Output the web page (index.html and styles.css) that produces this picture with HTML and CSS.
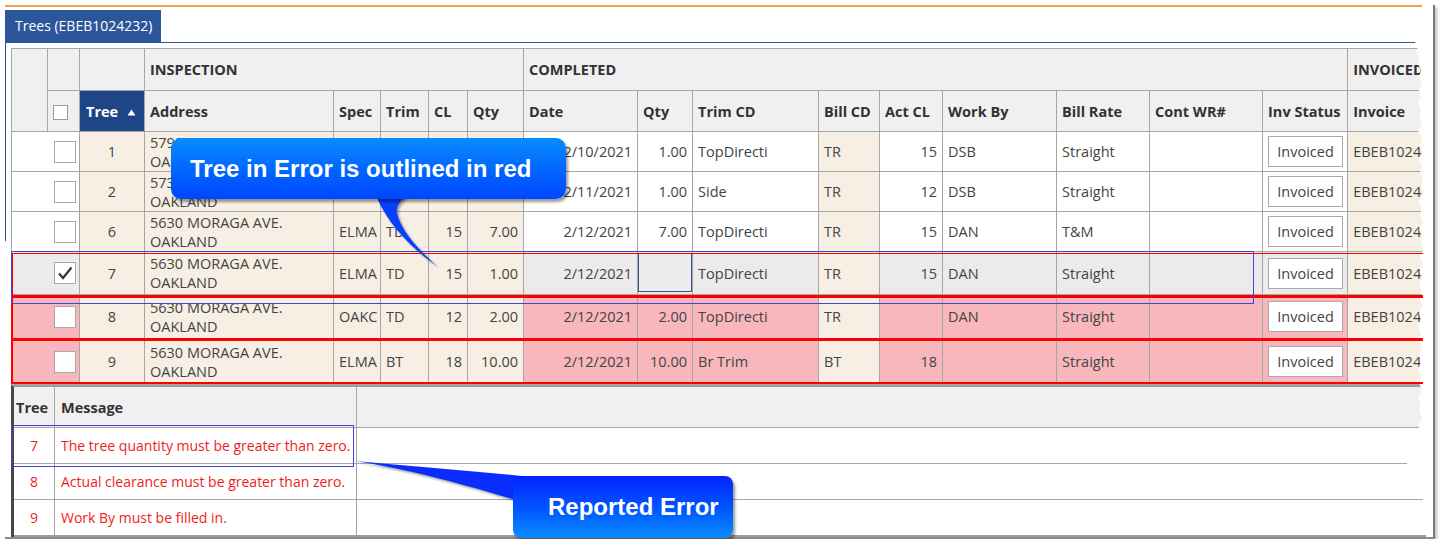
FILE: index.html
```html
<!DOCTYPE html>
<html>
<head>
<meta charset="utf-8">
<title>Trees</title>
<link rel="stylesheet" href="styles.css">
</head>
<body>
<div class="frame">
  <div class="tab">Trees (EBEB1024232)</div>
  <div class="panel">
    <table class="grid">
      <colgroup>
        <col><col><col><col><col><col><col><col><col><col><col><col><col><col><col><col><col><col>
      </colgroup>
      <thead>
        <tr class="hg">
          <th rowspan="2"></th><th></th><th></th>
          <th colspan="5">INSPECTION</th>
          <th colspan="9">COMPLETED</th>
          <th>INVOICED</th>
        </tr>
        <tr class="hc">
          <th><span class="cb cb-sm"></span></th>
          <th class="sorted">Tree <svg class="arrow" width="9" height="7" viewBox="0 0 9 7"><path d="M0.5 6.5 L4.5 0.5 L8.5 6.5 Z" fill="#fff"/></svg></th>
          <th>Address</th><th>Spec</th><th>Trim</th><th>CL</th><th>Qty</th>
          <th>Date</th><th>Qty</th><th>Trim CD</th><th>Bill CD</th><th>Act CL</th>
          <th>Work By</th><th>Bill Rate</th><th>Cont WR#</th><th>Inv Status</th>
          <th>Invoice</th>
        </tr>
      </thead>
      <tbody>
        <tr class="r40">
          <td colspan="2" class="sel"><span class="cb"></span></td>
          <td class="ro c">1</td>
          <td class="ro addr">5790 SKYLINE BLVD.<br>OAKLAND</td>
          <td class="ro r">ELMA</td><td class="ro">TD</td><td class="ro r">15</td><td class="ro r">1.00</td>
          <td class="r">2/10/2021</td><td class="r">1.00</td><td>TopDirecti</td><td class="ro">TR</td>
          <td class="r">15</td><td>DSB</td><td>Straight</td><td></td>
          <td class="c"><span class="inv">Invoiced</span></td>
          <td class="ro">EBEB1024232</td>
        </tr>
        <tr class="r40">
          <td colspan="2" class="sel"><span class="cb"></span></td>
          <td class="ro c">2</td>
          <td class="ro addr">5735 SKYLINE BLVD.<br>OAKLAND</td>
          <td class="ro r">ELMA</td><td class="ro">SD</td><td class="ro r">12</td><td class="ro r">1.00</td>
          <td class="r">2/11/2021</td><td class="r">1.00</td><td>Side</td><td class="ro">TR</td>
          <td class="r">12</td><td>DSB</td><td>Straight</td><td></td>
          <td class="c"><span class="inv">Invoiced</span></td>
          <td class="ro">EBEB1024232</td>
        </tr>
        <tr class="r40">
          <td colspan="2" class="sel"><span class="cb"></span></td>
          <td class="ro c">6</td>
          <td class="ro addr">5630 MORAGA AVE.<br>OAKLAND</td>
          <td class="ro r">ELMA</td><td class="ro">TD</td><td class="ro r">15</td><td class="ro r">7.00</td>
          <td class="r">2/12/2021</td><td class="r">7.00</td><td>TopDirecti</td><td class="ro">TR</td>
          <td class="r">15</td><td>DAN</td><td>T&amp;M</td><td></td>
          <td class="c"><span class="inv">Invoiced</span></td>
          <td class="ro">EBEB1024232</td>
        </tr>
        <tr class="r43 cur">
          <td colspan="2" class="sel"><span class="cb"><svg width="20" height="20" viewBox="0 0 20 20"><path d="M4 10.5 L8 15 L16.5 4.5" fill="none" stroke="#333" stroke-width="2.2"/></svg></span></td>
          <td class="ro c">7</td>
          <td class="ro addr">5630 MORAGA AVE.<br>OAKLAND</td>
          <td class="ro r">ELMA</td><td class="ro">TD</td><td class="ro r">15</td><td class="ro r">1.00</td>
          <td class="r">2/12/2021</td><td class="edit"><div class="editbox"></div></td><td>TopDirecti</td><td class="ro">TR</td>
          <td class="r">15</td><td>DAN</td><td>Straight</td><td></td>
          <td class="c"><span class="inv">Invoiced</span></td>
          <td class="ro">EBEB1024232</td>
        </tr>
        <tr class="r44 err">
          <td colspan="2" class="sel"><span class="cb"></span></td>
          <td class="ro c">8</td>
          <td class="ro addr">5630 MORAGA AVE.<br>OAKLAND</td>
          <td class="ro r">OAKC</td><td class="ro">TD</td><td class="ro r">12</td><td class="ro r">2.00</td>
          <td class="r">2/12/2021</td><td class="r">2.00</td><td>TopDirecti</td><td class="ro">TR</td>
          <td class="r"></td><td>DAN</td><td>Straight</td><td></td>
          <td class="c"><span class="inv">Invoiced</span></td>
          <td class="ro">EBEB1024232</td>
        </tr>
        <tr class="r46 err">
          <td colspan="2" class="sel"><span class="cb"></span></td>
          <td class="ro c">9</td>
          <td class="ro addr">5630 MORAGA AVE.<br>OAKLAND</td>
          <td class="ro r">ELMA</td><td class="ro">BT</td><td class="ro r">18</td><td class="ro r">10.00</td>
          <td class="r">2/12/2021</td><td class="r">10.00</td><td>Br Trim</td><td class="ro">BT</td>
          <td class="r">18</td><td></td><td>Straight</td><td></td>
          <td class="c"><span class="inv">Invoiced</span></td>
          <td class="ro">EBEB1024232</td>
        </tr>
      </tbody>
    </table>

    <table class="msgs">
      <colgroup><col><col><col></colgroup>
      <thead>
        <tr><th class="mt">Tree</th><th>Message</th><th></th></tr>
      </thead>
      <tbody>
        <tr><td class="c">7</td><td>The tree quantity must be greater than zero.</td><td></td></tr>
        <tr><td class="c">8</td><td>Actual clearance must be greater than zero.</td><td></td></tr>
        <tr class="last"><td class="c">9</td><td>Work By must be filled in.</td><td></td></tr>
      </tbody>
    </table>
  </div>

  <div class="mark red r7"></div>
  <div class="mark red r8"></div>
  <div class="mark red r9"></div>
  <div class="mark blue b1"></div>
  <div class="mark blue b2"></div>

  <svg class="tail tail1" width="80" height="80" viewBox="0 0 80 80">
    <path d="M5 0 L7 3 C19 30 40 52 68 72 C52 58 31 37 27 18 C26 10 31 5 38 0 Z" fill="#0640ff"/>
  </svg>
  <div class="callout c1">Tree in Error is outlined in red</div>

  <svg class="tail tail2" width="175" height="50" viewBox="0 0 175 50">
    <path d="M5 6 C60 11 120 16 172 21 L172 47 C130 34 60 14 5 6 Z" fill="#0a2cff"/>
  </svg>
  <div class="callout c2">Reported Error</div>
</div>
</body>
</html>
```

FILE: styles.css
```css
html, body {
  margin: 0;
  padding: 0;
  background: #fff;
  overflow: hidden;
}

body {
  font-family: "Open Sans", "Noto Sans", sans-serif;
  font-size: 14px;
  color: #444;
}

.frame {
  position: relative;
  margin: 5px 0 0 5px;
  width: 1430px;
  height: 534px;
  box-sizing: border-box;
  padding-top: 5px;
  border-right: 2px solid #7a7a7a;
  border-bottom: 2px solid #8c8c8c;
  box-shadow: 2px 2px 3px rgba(0, 0, 0, 0.25);
  background: linear-gradient(#f0a24c, #f0a24c) 0 0 / 1417px 2px no-repeat, #fff;
}

.tab {
  width: max-content;
  height: 32px;
  line-height: 32px;
  padding: 0 9px 0 10px;
  background: #2b579a;
  color: #fff;
  font-size: 14px;
}

.panel {
  border-top: 1px solid #2b579a;
  padding: 5px 0 0 6px;
  background: linear-gradient(#2b579a, #2b579a) 0 0 / 1px 198px no-repeat;
  clip-path: polygon(0 0, 1410px 0, 1413px 5px, 1411px 10px, 1415px 16px, 1413px 22px, 1416px 28px, 1414px 35px, 1417px 41px, 1414px 48px, 1416px 55px, 1413px 61px, 1416px 68px, 1414px 75px, 1417px 82px, 1413px 89px, 1417px 96px, 1415px 103px, 1418px 110px, 1414px 117px, 1417px 124px, 1415px 131px, 1418px 138px, 1416px 145px, 1418px 152px, 1414px 159px, 1417px 166px, 1415px 173px, 1418px 180px, 1414px 187px, 1417px 194px, 1416px 201px, 1418px 208px, 1415px 215px, 1418px 222px, 1415px 229px, 1417px 236px, 1414px 243px, 1417px 250px, 1415px 257px, 1418px 264px, 1414px 271px, 1416px 278px, 1413px 285px, 1416px 292px, 1414px 299px, 1417px 306px, 1414px 313px, 1416px 320px, 1413px 327px, 1416px 334px, 1414px 341px, 1417px 348px, 1413px 355px, 1416px 362px, 1414px 369px, 1417px 376px, 1413px 383px, 1416px 390px, 1405px 400px, 1402px 421px, 1404px 430px, 1418px 440px, 1418px 460px, 1421px 470px, 1421px 500px, 0 500px);
}

/* ---------- main grid ---------- */
.grid {
  border-collapse: separate;
  border-spacing: 0;
  table-layout: fixed;
  width: 1417px;
  border-top: 1px solid #a6a6a6;
  border-left: 1px solid #a6a6a6;
  font-size: 14.5px;
}

.grid col:nth-child(1) { width: 36px; }
.grid col:nth-child(2) { width: 32px; }
.grid col:nth-child(3) { width: 65px; }
.grid col:nth-child(4) { width: 189px; }
.grid col:nth-child(5) { width: 47px; }
.grid col:nth-child(6) { width: 48px; }
.grid col:nth-child(7) { width: 39px; }
.grid col:nth-child(8) { width: 56px; }
.grid col:nth-child(9) { width: 114px; }
.grid col:nth-child(10) { width: 55px; }
.grid col:nth-child(11) { width: 126px; }
.grid col:nth-child(12) { width: 61px; }
.grid col:nth-child(13) { width: 63px; }
.grid col:nth-child(14) { width: 114px; }
.grid col:nth-child(15) { width: 93px; }
.grid col:nth-child(16) { width: 113px; }
.grid col:nth-child(17) { width: 85px; }
.grid col:nth-child(18) { width: 80px; }

.grid th,
.grid td {
  border-right: 1px solid #a6a6a6;
  border-bottom: 1px solid #a6a6a6;
  padding: 0 5px;
  box-sizing: border-box;
  white-space: nowrap;
  overflow: hidden;
  vertical-align: middle;
}

.grid th {
  background: #f0f0f0;
  color: #333;
  font-weight: 700;
  text-align: left;
}

.hg { height: 42px; }
.hc { height: 41px; }
.r40 { height: 40px; }
.r43 { height: 43px; }
.r44 { height: 44px; }
.r46 { height: 46px; }

.grid th.sorted {
  background: #1e4586;
  color: #fff;
  padding-left: 6px;
}

.arrow {
  margin-left: 5px;
  vertical-align: 1px;
}

.grid td { background: #fff; }
.grid td.ro { background: #f7efe3; }
.grid .cur td { background: #ebebeb; }
.grid .cur td.ro { background: #f7efe3; }
.grid .err td { background: #f8b7bc; }
.grid .err td.ro { background: #f7efe3; }

.grid td.r { text-align: right; }
.grid td.c { text-align: center; }

.grid td.addr {
  line-height: 19px;
}

.grid td.sel {
  text-align: right;
  padding-right: 3px;
}

.cb {
  display: inline-block;
  vertical-align: middle;
  width: 22px;
  height: 22px;
  box-sizing: border-box;
  border: 1px solid #a9a9a9;
  background: #fff;
}

.cb svg { display: block; margin: 0; }

.cb-sm {
  width: 15px;
  height: 15px;
  border-color: #9a9a9a;
}

.inv {
  display: inline-block;
  width: 75px;
  height: 31px;
  line-height: 29px;
  box-sizing: border-box;
  border: 1px solid #a9a9a9;
  background: #fff;
  text-align: center;
  vertical-align: middle;
}

.grid td.edit {
  padding: 1px 0 0 0;
  vertical-align: top;
}

.editbox {
  height: 39px;
  box-sizing: border-box;
  border: 1px solid #34558a;
  background: #ececec;
}

/* ---------- message grid ---------- */
.msgs {
  border-collapse: separate;
  border-spacing: 0;
  table-layout: fixed;
  width: 1417px;
  border-top: 2px solid #9e9e9e;
  border-left: 3px solid #474747;
  font-size: 14px;
}

.msgs col:nth-child(1) { width: 41px; }
.msgs col:nth-child(2) { width: 302px; }
.msgs col:nth-child(3) { width: 1071px; }

.msgs th,
.msgs td {
  border-right: 1px solid #a6a6a6;
  border-bottom: 1px solid #a6a6a6;
  padding: 0 6px;
  box-sizing: border-box;
  white-space: nowrap;
}

.msgs th:last-child,
.msgs td:last-child { border-right: none; }

.msgs thead tr { height: 41px; }
.msgs tbody tr { height: 36px; }
.msgs tbody tr.last { height: 37px; }
.msgs tr.last td { border-bottom: 2px solid #9e9e9e; }

.msgs th {
  background: #f0f0f0;
  color: #333;
  font-weight: 700;
  font-size: 14.5px;
  text-align: left;
}

.msgs th.mt { padding: 0 0 0 2px; }

.msgs td {
  color: #f01c1c;
}

.msgs td.c {
  text-align: center;
  padding: 0;
}

/* ---------- annotations ---------- */
.mark {
  position: absolute;
  box-sizing: border-box;
  pointer-events: none;
}

.red { border: 2px solid #ff0000; border-right: none; left: 6px; width: 1412px; }
.r7 { top: 248px; height: 44px; border-top-width: 1px; }
.r8 { top: 291px; height: 44px; }
.r9 { top: 334px; height: 45px; }

.blue { border: 1px solid #4343dc; }
.b1 { left: 6px; top: 246px; width: 1243px; height: 53px; }
.b2 { left: 6px; top: 420px; width: 343px; height: 42px; }

.tail {
  position: absolute;
  filter: drop-shadow(2px 2px 1px rgba(0, 0, 0, 0.35));
}

.tail1 { left: 365px; top: 190px; }
.tail2 { left: 345px; top: 450px; }

.callout {
  position: absolute;
  box-sizing: border-box;
  border-radius: 10px;
  color: #fff;
  font-family: "Liberation Sans", Arial, sans-serif;
  font-weight: 700;
  font-size: 24px;
  box-shadow: 2px 3px 3px rgba(0, 0, 0, 0.4);
  white-space: nowrap;
}

.c1 {
  left: 166px;
  top: 133px;
  width: 395px;
  height: 61px;
  line-height: 61px;
  padding-left: 19px;
  background: linear-gradient(#0a8cff 0%, #0068ff 50%, #0046ff 100%);
}

.c2 {
  left: 508px;
  top: 471px;
  width: 220px;
  height: 62px;
  line-height: 62px;
  padding-left: 35px;
  border-radius: 8px;
  background: linear-gradient(#0424ff 0%, #0058ff 55%, #0a8cff 100%);
}
```
